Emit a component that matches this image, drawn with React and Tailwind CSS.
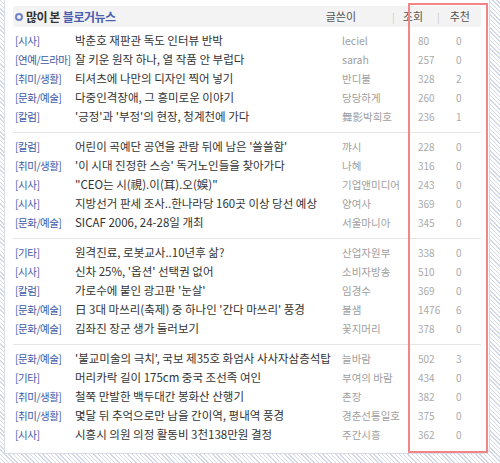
import React from 'react';

// 많이 본 블로거뉴스 목록
const groups = [
  [
    { cat: '시사', title: '박춘호 재판관 독도 인터뷰 반박', author: 'leciel', views: 80, rec: 0 },
    { cat: '연예/드라마', title: '잘 키운 원작 하나, 열 작품 안 부럽다', author: 'sarah', views: 257, rec: 0 },
    { cat: '취미/생활', title: '티셔츠에 나만의 디자인 찍어 넣기', author: '반디불', views: 328, rec: 2 },
    { cat: '문화/예술', title: '다중인격장애, 그 흥미로운 이야기', author: '당당하게', views: 260, rec: 0 },
    { cat: '칼럼', title: "'긍정'과 '부정'의 현장, 청계천에 가다", author: '舞影박희호', views: 236, rec: 1 },
  ],
  [
    { cat: '칼럼', title: "어린이 곡예단 공연을 관람 뒤에 남은 '쓸쓸함'", author: '꺄시', views: 228, rec: 0 },
    { cat: '취미/생활', title: "'이 시대 진정한 스승' 독거노인들을 찾아가다", author: '나혜', views: 316, rec: 0 },
    { cat: '시사', title: '"CEO는 시(視).이(耳).오(娛)"', author: '기업앤미디어', views: 243, rec: 0 },
    { cat: '시사', title: '지방선거 판세 조사..한나라당 160곳 이상 당선 예상', author: '양여사', views: 369, rec: 0 },
    { cat: '문화/예술', title: 'SICAF 2006, 24-28일 개최', author: '서울마니아', views: 345, rec: 0 },
  ],
  [
    { cat: '기타', title: '원격진료, 로봇교사..10년후 삶?', author: '산업자원부', views: 338, rec: 0 },
    { cat: '시사', title: "신차 25%, '옵션' 선택권 없어", author: '소비자방송', views: 510, rec: 0 },
    { cat: '칼럼', title: "가로수에 붙인 광고판 '눈살'", author: '임경수', views: 369, rec: 0 },
    { cat: '문화/예술', title: "日 3대 마쓰리(축제) 중 하나인 '간다 마쓰리' 풍경", author: '불샘', views: 1476, rec: 6 },
    { cat: '문화/예술', title: '김좌진 장군 생가 둘러보기', author: '꽃지머리', views: 378, rec: 0 },
  ],
  [
    { cat: '문화/예술', title: "'불교미술의 극치', 국보 제35호 화엄사 사사자삼층석탑", author: '늘바람', views: 502, rec: 3 },
    { cat: '기타', title: '머리카락 길이 175cm 중국 조선족 여인', author: '부여의 바람', views: 434, rec: 0 },
    { cat: '취미/생활', title: '철쭉 만발한 백두대간 봉화산 산행기', author: '촌장', views: 382, rec: 0 },
    { cat: '취미/생활', title: '몇달 뒤 추억으로만 남을 간이역, 평내역 풍경', author: '경춘선통일호', views: 375, rec: 0 },
    { cat: '시사', title: '시흥시 의원 의정 활동비 3천138만원 결정', author: '주간시흥', views: 362, rec: 0 },
  ],
];

const Row = ({ item }) => (
  <div className="flex items-center h-[19px] whitespace-nowrap">
    <span className="w-[60px] text-[10.5px] tracking-[-0.5px] text-[#3d5aa8] overflow-hidden">[{item.cat}]</span>
    <span className="w-[267px] text-[11.5px] text-[#333] overflow-hidden">{item.title}</span>
    <span className="w-[76px] text-[10.5px] text-[#a0a0a0] overflow-hidden">{item.author}</span>
    <span className="w-[38px] text-[10px] text-[#aaa]">{item.views}</span>
    <span className="text-[10px] text-[#aaa]">{item.rec}</span>
  </div>
);

export default function App() {
  return (
    <div
      className="relative w-[500px] h-[463px] overflow-hidden bg-[repeating-linear-gradient(45deg,#d3d9e7_0_1px,#ffffff_1px_3px)]"
      style={{ fontFamily: '"Noto Sans CJK KR", "Noto Sans", sans-serif' }}
    >
      <div className="ml-[4px] w-[486px] h-[454px] bg-white border-l border-r border-b border-[#d8dce6] rounded-br-[6px] px-[8px] pt-[6px]">
        {/* header */}
        <div className="flex items-center h-[21px] bg-[#f3f3f3] rounded-[3px] whitespace-nowrap">
          <span className="ml-[2px] w-[8px] h-[8px] rounded-full border-2 border-[#6f82c4]" />
          <span className="ml-[3px] text-[12px] font-bold text-[#333] tracking-[-0.5px]">많이 본</span>
          <span className="ml-[3px] text-[12px] font-bold text-[#4a5fb0] tracking-[-0.5px]">블로거뉴스</span>
          <span className="ml-auto text-[11px] text-[#555]">글쓴이</span>
          <span className="ml-[36px] text-[10px] text-[#ccc]">|</span>
          <span className="ml-[8px] text-[11px] text-[#555]">조회</span>
          <span className="ml-[14px] text-[10px] text-[#ccc]">|</span>
          <span className="ml-[10px] mr-[11px] text-[11px] text-[#555]">추천</span>
        </div>

        <div className="mt-[4px] pl-[2px]">
          {groups.map((g, gi) => (
            <div key={gi}>
              {gi > 0 && <div className="mt-[6px] mb-[4px] border-t border-[#e6e6e6] -ml-[2px]" />}
              {g.map((item, i) => (
                <Row key={i} item={item} />
              ))}
            </div>
          ))}
        </div>
      </div>

      {/* highlight box */}
      <div className="absolute left-[408px] top-[3px] w-[80px] h-[450px] border-2 border-[#f08686]" />
    </div>
  );
}
